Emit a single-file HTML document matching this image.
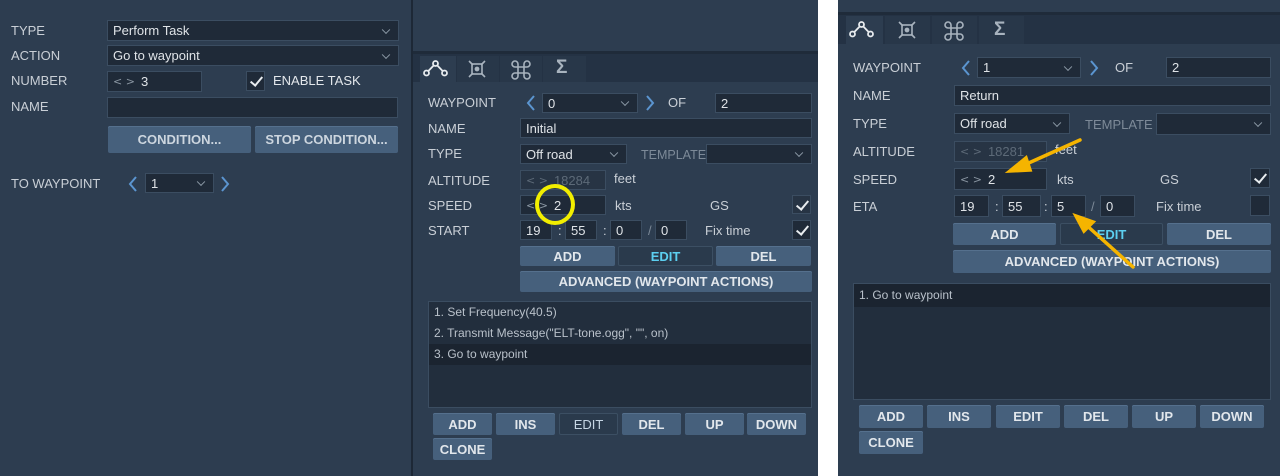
<!DOCTYPE html>
<html><head><meta charset="utf-8"><style>
*{margin:0;padding:0;box-sizing:border-box}
body{width:1280px;height:476px;position:relative;overflow:hidden;background:#fff;font-family:"Liberation Sans","DejaVu Sans",sans-serif;font-size:13px;color:#d4d9de}
.p{position:absolute;background:#2d3d50}
.a{position:absolute}
.l{position:absolute;color:#c9cfd6;font-size:13px;line-height:14px;transform:translateY(-7px)}
.g{color:#7d8a98}
.in{position:absolute;background:#1f2a38;border:1px solid #3b4d61;color:#dfe3e7;font-size:13px;padding-left:5px;display:flex;align-items:center;white-space:nowrap}
.sel::after{content:"";position:absolute;right:9px;top:50%;width:5px;height:5px;border-right:1.3px solid #8c99a6;border-bottom:1.3px solid #8c99a6;transform:translateY(-70%) rotate(45deg)}
.btn{position:absolute;background:#46607c;border-radius:2px;color:#e2e7ec;font-weight:bold;font-size:13px;display:flex;align-items:center;justify-content:center;box-shadow:inset 0 1px 0 #55708d}
.dk{background:#2a3a4c;border:1px solid #3c4f63;box-shadow:none}
.cb{position:absolute;background:#1f2a38;border:1px solid #3b4d61}
.cb.k::after{content:"";position:absolute;left:6px;top:2px;width:5px;height:10px;border-right:2px solid #e8ecef;border-bottom:2px solid #e8ecef;transform:rotate(40deg)}
.arr{position:absolute;transform:translateY(-8px)}
.sp{color:#8a96a2;margin-right:6px;font-size:11px;letter-spacing:0;font-family:"DejaVu Sans",sans-serif}
.strip{position:absolute;background:#243244}
.tab{position:absolute;background:#283749}
.tab.on{background:#2d3d50}
.list{position:absolute;background:#222e3d;border:1px solid #3b4d61}
.li{position:absolute;left:0;right:0;height:21px;padding-left:5px;color:#b9c1ca;font-size:12px;line-height:21px}
</style></head><body>

<!-- LEFT PANEL -->
<div class="p" style="left:0;top:0;width:411px;height:476px"></div>
<div class="a" style="left:411px;top:0;width:2px;height:476px;background:#1d2836"></div>
<div class="l" style="left:11px;top:31px">TYPE</div>
<div class="in sel" style="left:107px;top:20px;width:292px;height:21px">Perform Task</div>
<div class="l" style="left:11px;top:56px">ACTION</div>
<div class="in sel" style="left:107px;top:45px;width:292px;height:21px">Go to waypoint</div>
<div class="l" style="left:11px;top:81px">NUMBER</div>
<div class="in" style="left:107px;top:71px;width:95px;height:21px"><span class="sp">&lt; &gt;</span>3</div>
<div class="cb k" style="left:246px;top:71px;width:19px;height:20px"></div>
<div class="l" style="left:273px;top:81px;color:#e3e7eb">ENABLE TASK</div>
<div class="l" style="left:11px;top:107px">NAME</div>
<div class="in" style="left:107px;top:97px;width:291px;height:21px"></div>
<div class="btn" style="left:108px;top:126px;width:143px;height:27px;color:#cdd6df">CONDITION...</div>
<div class="btn" style="left:255px;top:126px;width:143px;height:27px;color:#cdd6df">STOP CONDITION...</div>
<div class="l" style="left:11px;top:184px">TO WAYPOINT</div>
<svg class="arr" style="left:128px;top:184px" width="10" height="16"><path d="M8 1L2 8L8 15" fill="none" stroke="#5b95d0" stroke-width="2"/></svg>
<div class="in sel" style="left:145px;top:173px;width:69px;height:20px">1</div>
<svg class="arr" style="left:220px;top:184px" width="10" height="16"><path d="M2 1L8 8L2 15" fill="none" stroke="#5b95d0" stroke-width="2"/></svg>

<!-- MIDDLE PANEL -->
<div class="p" style="left:413px;top:0;width:405px;height:476px"></div>
<div class="strip" style="left:413px;top:51px;width:405px;height:31px"></div>
<div class="a" style="left:413px;top:51px;width:405px;height:3px;background:#1f2b3a"></div>
<div class="tab on" style="left:420px;top:56px;width:36px;height:26px"></div>
<div class="tab" style="left:457px;top:56px;width:42px;height:26px"></div>
<div class="tab" style="left:500px;top:56px;width:42px;height:26px"></div>
<div class="tab" style="left:543px;top:56px;width:43px;height:26px"></div>
<svg class="a" style="left:422px;top:59px" width="30" height="20" viewBox="0 0 30 20" fill="none" stroke="#e8ecef" stroke-width="1.8"><circle cx="4.5" cy="14" r="2.5"/><circle cx="22.5" cy="14" r="2.5"/><circle cx="13.5" cy="4.5" r="2.5"/><path d="M6.2 12.1L11.8 6.4M15.2 6.4L20.8 12.1"/></svg>
<svg class="a" style="left:466px;top:58px" width="22" height="22" viewBox="0 0 22 22" fill="none" stroke="#a8b3be" stroke-width="1.6"><path d="M3 3L7 7M19 3L15 7M3 19L7 15M19 19L15 15"/><rect x="6" y="6" width="10" height="10"/><circle cx="11" cy="11" r="1.6" fill="#a8b3be"/></svg>
<svg class="a" style="left:509px;top:58px" width="24" height="24" viewBox="0 0 24 24" fill="none" stroke="#a8b3be" stroke-width="1.6"><path d="M9 9H15V15H9Z M9 9V6A3 3 0 1 0 6 9H9 M15 9V6A3 3 0 1 1 18 9H15 M9 15V18A3 3 0 1 1 6 15H9 M15 15V18A3 3 0 1 0 18 15H15"/></svg>
<div class="a" style="left:556px;top:57px;font-size:19px;color:#a8b3be;font-weight:bold">Σ</div>

<div class="l" style="left:428px;top:103px">WAYPOINT</div>
<svg class="arr" style="left:526px;top:103px" width="10" height="16"><path d="M8 1L2 8L8 15" fill="none" stroke="#5b95d0" stroke-width="2"/></svg>
<div class="in sel" style="left:542px;top:93px;width:96px;height:20px">0</div>
<svg class="arr" style="left:645px;top:103px" width="10" height="16"><path d="M2 1L8 8L2 15" fill="none" stroke="#5b95d0" stroke-width="2"/></svg>
<div class="l" style="left:668px;top:103px">OF</div>
<div class="in" style="left:715px;top:93px;width:97px;height:20px">2</div>
<div class="l" style="left:428px;top:129px">NAME</div>
<div class="in" style="left:520px;top:118px;width:292px;height:20px">Initial</div>
<div class="l" style="left:428px;top:154px">TYPE</div>
<div class="in sel" style="left:520px;top:144px;width:107px;height:20px">Off road</div>
<div class="l g" style="left:641px;top:155px;font-size:12.5px">TEMPLATE</div>
<div class="in sel" style="left:706px;top:144px;width:106px;height:20px"></div>
<div class="l" style="left:428px;top:181px">ALTITUDE</div>
<div class="in" style="left:520px;top:170px;width:86px;height:20px;background:#273444;color:#5d6a78"><span class="sp" style="color:#5d6a78">&lt; &gt;</span>18284</div>
<div class="l" style="left:614px;top:179px">feet</div>
<div class="l" style="left:428px;top:206px">SPEED</div>
<div class="in" style="left:520px;top:195px;width:86px;height:20px"><span class="sp">&lt; &gt;</span>2</div>
<div class="l" style="left:615px;top:206px">kts</div>
<div class="l" style="left:710px;top:206px">GS</div>
<div class="cb k" style="left:792px;top:195px;width:19px;height:19px;background:#273444"></div>
<div class="l" style="left:428px;top:231px">START</div>
<div class="in" style="left:520px;top:220px;width:32px;height:20px">19</div>
<div class="l" style="left:558px;top:231px">:</div>
<div class="in" style="left:565px;top:220px;width:32px;height:20px">55</div>
<div class="l" style="left:603px;top:231px">:</div>
<div class="in" style="left:610px;top:220px;width:32px;height:20px">0</div>
<div class="l g" style="left:648px;top:231px">/</div>
<div class="in" style="left:655px;top:220px;width:32px;height:20px">0</div>
<div class="l" style="left:705px;top:231px">Fix time</div>
<div class="cb k" style="left:792px;top:220px;width:19px;height:20px"></div>
<div class="btn" style="left:520px;top:246px;width:95px;height:20px">ADD</div>
<div class="btn dk" style="left:618px;top:246px;width:95px;height:20px;color:#5ccff0">EDIT</div>
<div class="btn" style="left:716px;top:246px;width:95px;height:20px">DEL</div>
<div class="btn" style="left:520px;top:271px;width:292px;height:21px">ADVANCED (WAYPOINT ACTIONS)</div>
<div class="list" style="left:428px;top:301px;width:384px;height:107px">
<div class="li" style="top:0">1. Set Frequency(40.5)</div>
<div class="li" style="top:21px">2. Transmit Message("ELT-tone.ogg", "", on)</div>
<div class="li" style="top:42px;background:#1b2430">3. Go to waypoint</div>
</div>
<div class="btn" style="left:433px;top:413px;width:59px;height:22px">ADD</div>
<div class="btn" style="left:496px;top:413px;width:59px;height:22px">INS</div>
<div class="btn dk" style="left:559px;top:413px;width:59px;height:22px;color:#c6d6e4;font-weight:normal">EDIT</div>
<div class="btn" style="left:622px;top:413px;width:59px;height:22px">DEL</div>
<div class="btn" style="left:685px;top:413px;width:59px;height:22px">UP</div>
<div class="btn" style="left:747px;top:413px;width:59px;height:22px">DOWN</div>
<div class="btn" style="left:433px;top:438px;width:59px;height:22px">CLONE</div>
<div class="a" style="left:535px;top:184px;width:40px;height:41px;border:4px solid #f2ee00;border-radius:50%"></div>

<!-- RIGHT PANEL -->
<div class="p" style="left:838px;top:0;width:442px;height:476px"></div>
<div class="strip" style="left:838px;top:12px;width:442px;height:32px"></div>
<div class="a" style="left:838px;top:12px;width:442px;height:3px;background:#1f2b3a"></div>
<div class="tab on" style="left:846px;top:16px;width:37px;height:29px"></div>
<div class="tab" style="left:885px;top:16px;width:45px;height:28px"></div>
<div class="tab" style="left:932px;top:16px;width:45px;height:28px"></div>
<div class="tab" style="left:979px;top:16px;width:45px;height:28px"></div>
<svg class="a" style="left:848px;top:20px" width="30" height="20" viewBox="0 0 30 20" fill="none" stroke="#e8ecef" stroke-width="1.8"><circle cx="4.5" cy="14" r="2.5"/><circle cx="22.5" cy="14" r="2.5"/><circle cx="13.5" cy="4.5" r="2.5"/><path d="M6.2 12.1L11.8 6.4M15.2 6.4L20.8 12.1"/></svg>
<svg class="a" style="left:896px;top:19px" width="22" height="22" viewBox="0 0 22 22" fill="none" stroke="#a8b3be" stroke-width="1.6"><path d="M3 3L7 7M19 3L15 7M3 19L7 15M19 19L15 15"/><rect x="6" y="6" width="10" height="10"/><circle cx="11" cy="11" r="1.6" fill="#a8b3be"/></svg>
<svg class="a" style="left:942px;top:19px" width="24" height="24" viewBox="0 0 24 24" fill="none" stroke="#a8b3be" stroke-width="1.6"><path d="M9 9H15V15H9Z M9 9V6A3 3 0 1 0 6 9H9 M15 9V6A3 3 0 1 1 18 9H15 M9 15V18A3 3 0 1 1 6 15H9 M15 15V18A3 3 0 1 0 18 15H15"/></svg>
<div class="a" style="left:994px;top:19px;font-size:19px;color:#a8b3be;font-weight:bold">Σ</div>

<div class="l" style="left:853px;top:68px">WAYPOINT</div>
<svg class="arr" style="left:961px;top:68px" width="10" height="16"><path d="M8 1L2 8L8 15" fill="none" stroke="#5b95d0" stroke-width="2"/></svg>
<div class="in sel" style="left:977px;top:57px;width:104px;height:21px">1</div>
<svg class="arr" style="left:1089px;top:68px" width="10" height="16"><path d="M2 1L8 8L2 15" fill="none" stroke="#5b95d0" stroke-width="2"/></svg>
<div class="l" style="left:1115px;top:68px">OF</div>
<div class="in" style="left:1166px;top:57px;width:105px;height:21px">2</div>
<div class="l" style="left:853px;top:96px">NAME</div>
<div class="in" style="left:954px;top:85px;width:317px;height:21px">Return</div>
<div class="l" style="left:853px;top:124px">TYPE</div>
<div class="in sel" style="left:954px;top:113px;width:116px;height:21px">Off road</div>
<div class="l g" style="left:1085px;top:125px">TEMPLATE</div>
<div class="in sel" style="left:1156px;top:113px;width:115px;height:22px"></div>
<div class="l" style="left:853px;top:152px">ALTITUDE</div>
<div class="in" style="left:954px;top:141px;width:93px;height:21px;background:#273444;color:#5d6a78"><span class="sp" style="color:#5d6a78">&lt; &gt;</span>18281</div>
<div class="l" style="left:1055px;top:150px">feet</div>
<div class="l" style="left:853px;top:180px">SPEED</div>
<div class="in" style="left:954px;top:168px;width:93px;height:22px"><span class="sp">&lt; &gt;</span>2</div>
<div class="l" style="left:1057px;top:180px">kts</div>
<div class="l" style="left:1160px;top:180px">GS</div>
<div class="cb k" style="left:1250px;top:168px;width:20px;height:20px"></div>
<div class="l" style="left:853px;top:207px">ETA</div>
<div class="in" style="left:954px;top:195px;width:35px;height:22px">19</div>
<div class="l" style="left:995px;top:207px">:</div>
<div class="in" style="left:1002px;top:195px;width:39px;height:22px">55</div>
<div class="l" style="left:1044px;top:207px">:</div>
<div class="in" style="left:1051px;top:195px;width:35px;height:22px">5</div>
<div class="l g" style="left:1091px;top:207px">/</div>
<div class="in" style="left:1100px;top:195px;width:35px;height:22px">0</div>
<div class="l" style="left:1156px;top:207px">Fix time</div>
<div class="cb" style="left:1250px;top:195px;width:20px;height:21px"></div>
<div class="btn" style="left:953px;top:223px;width:103px;height:22px">ADD</div>
<div class="btn dk" style="left:1060px;top:223px;width:103px;height:22px;color:#5ccff0">EDIT</div>
<div class="btn" style="left:1167px;top:223px;width:104px;height:22px">DEL</div>
<div class="btn" style="left:953px;top:250px;width:318px;height:23px">ADVANCED (WAYPOINT ACTIONS)</div>
<div class="list" style="left:853px;top:283px;width:418px;height:117px">
<div class="li" style="top:0;height:23px;line-height:23px;background:#1b2430">1. Go to waypoint</div>
</div>
<div class="btn" style="left:859px;top:405px;width:64px;height:23px">ADD</div>
<div class="btn" style="left:927px;top:405px;width:64px;height:23px">INS</div>
<div class="btn" style="left:996px;top:405px;width:64px;height:23px">EDIT</div>
<div class="btn" style="left:1064px;top:405px;width:64px;height:23px">DEL</div>
<div class="btn" style="left:1132px;top:405px;width:64px;height:23px">UP</div>
<div class="btn" style="left:1200px;top:405px;width:64px;height:23px">DOWN</div>
<div class="btn" style="left:859px;top:431px;width:64px;height:23px">CLONE</div>
<svg class="a" style="left:0;top:0" width="1280" height="476" viewBox="0 0 1280 476">
<g stroke="#f5b400" stroke-width="3.5" fill="#f5b400" stroke-linecap="round">
<path d="M1080 140L1022 166" fill="none"/><path d="M1010 171L1026 158L1030 170Z"/>
<path d="M1133 267L1084 223" fill="none"/><path d="M1076 216L1093 222L1084 231Z"/>
</g></svg>
</body></html>
